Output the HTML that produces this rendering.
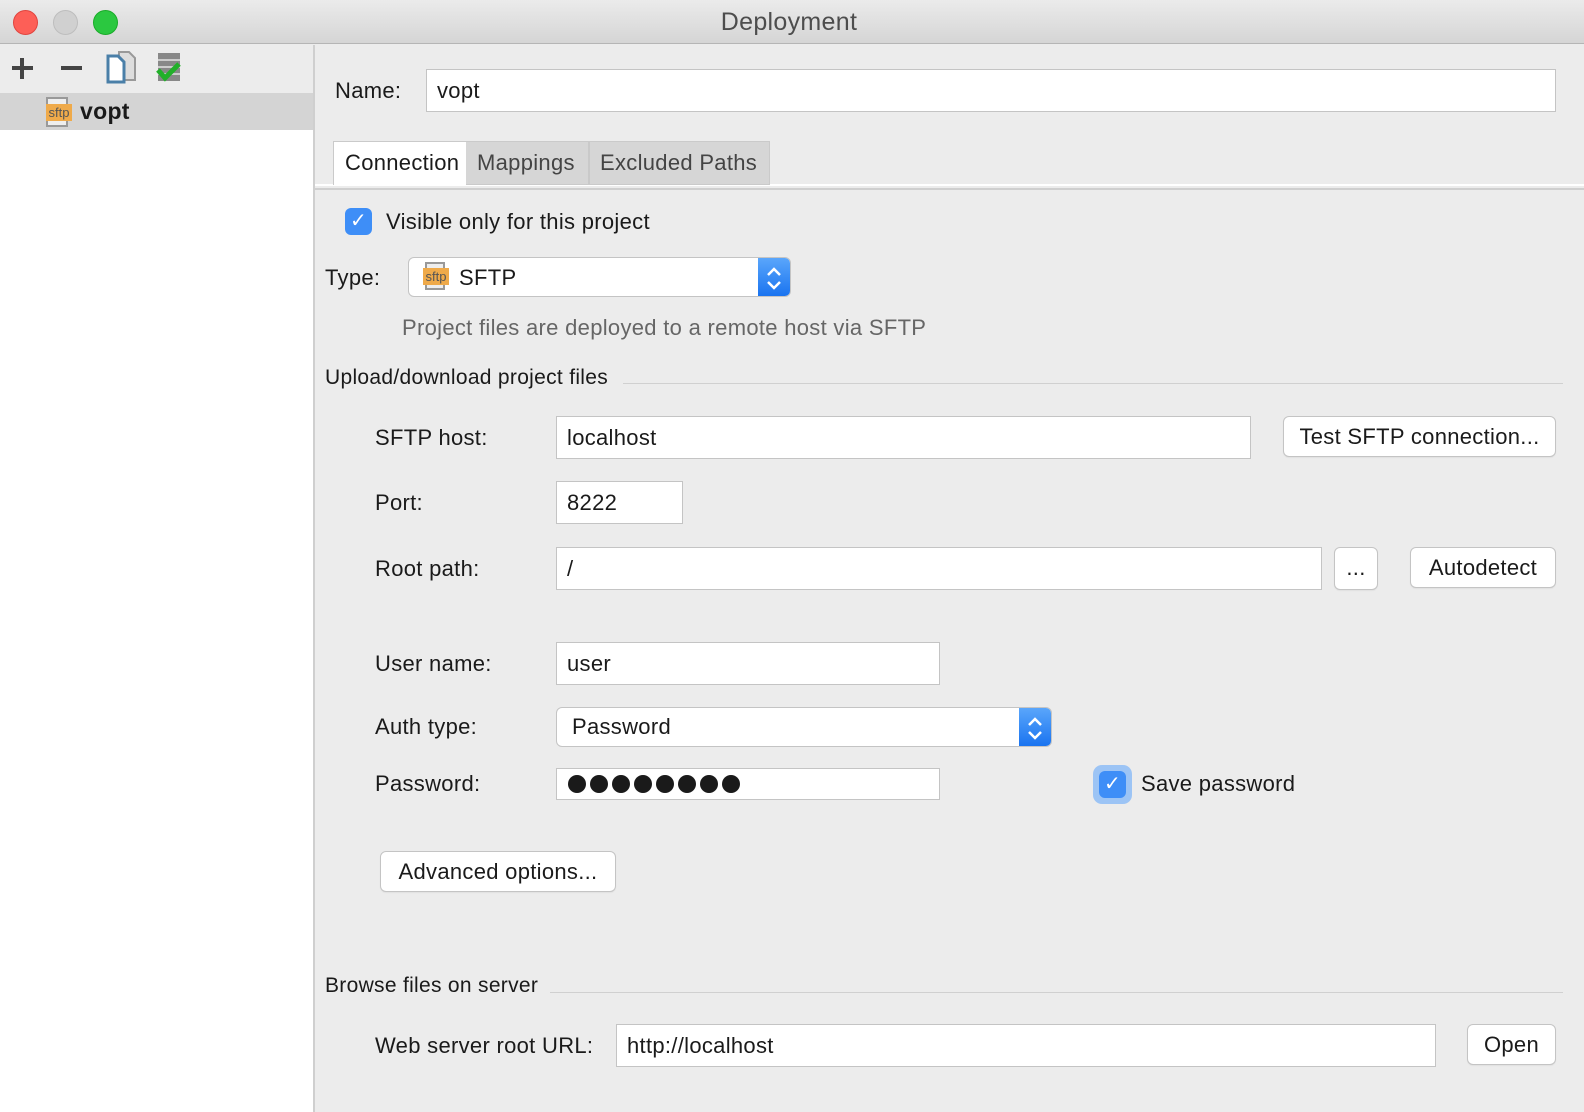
<!DOCTYPE html>
<html><head><meta charset="utf-8"><style>
*{box-sizing:border-box;margin:0;padding:0}
body{width:1584px;height:1112px;overflow:hidden;background:#ececec;font-family:"Liberation Sans",sans-serif;font-size:22px;letter-spacing:0.3px;color:#1a1a1a;position:relative}
.a{position:absolute;white-space:nowrap}
.tb{left:0;top:0;width:1584px;height:44px;background:linear-gradient(#ebebeb,#d5d5d5);border-bottom:1px solid #b5b5b5}
.dot{top:10px;width:25px;height:25px;border-radius:50%}
.inp{background:#fff;border:1px solid #c4c4c4;height:43px;padding:0 10px;line-height:41px}
.btn{background:#fff;border:1px solid #c4c4c4;border-radius:6px;height:41px;line-height:39px;text-align:center;box-shadow:0 1px 1px rgba(0,0,0,.05)}
.lbl{line-height:24px}
.cb{width:27px;height:27px;border-radius:6px;background:#3e8ef7;color:#fff;text-align:center;font-size:20px;line-height:27px}
.sel{background:#fff;border:1px solid #c4c4c4;border-radius:6px;overflow:hidden}
.arr{position:absolute;right:0;top:0;bottom:0;width:32px;background:linear-gradient(#5aa6fb,#1a74f0)}
.hr{height:1px;background:#d0d0d0}
</style></head><body>
<div class="a tb"></div>
<div class="a dot" style="left:13px;background:#fd5f57;border:1px solid #e0443e"></div>
<div class="a dot" style="left:53px;background:#d0d0d0;border:1px solid #bdbdbd"></div>
<div class="a dot" style="left:93px;background:#2bc840;border:1px solid #1aab29"></div>
<div class="a" style="left:0;width:1578px;top:8px;text-align:center;font-size:25px;color:#4d4d4d">Deployment</div>

<div class="a" style="left:0;top:45px;width:313px;height:1067px;background:#fff"></div>
<div class="a" style="left:0;top:45px;width:313px;height:48px;background:#ececec"></div>
<div class="a" style="left:313px;top:45px;width:2px;height:1067px;background:#cfcfcf"></div>
<div class="a" style="left:0;top:93px;width:313px;height:37px;background:#d4d4d4"></div>
<div class="a" style="left:12px;top:66px;width:21px;height:4px;background:#444"></div>
<div class="a" style="left:20px;top:58px;width:4px;height:21px;background:#444"></div>
<div class="a" style="left:61px;top:66px;width:21px;height:4px;background:#444"></div>
<svg class="a" style="left:105px;top:50px" width="32" height="34"><path d="M14 2h10l6 6v22H14z" fill="#ddd" stroke="#999" stroke-width="2"/><path d="M3 6h10l6 6v20H3z" fill="#fff" stroke="#4a7fa8" stroke-width="3"/></svg>
<svg class="a" style="left:155px;top:52px" width="28" height="32"><rect x="3" y="1" width="22" height="28" fill="#888"/><path d="M3 8h22M3 15h22M3 22h22" stroke="#ccc" stroke-width="2"/><path d="M3 18l7 8 14-14" stroke="#22b02a" stroke-width="5" fill="none"/></svg>
<div class="a" style="left:46px;top:97px;width:22px;height:30px;border:2px solid #999;background:#eee"></div>
<div class="a" style="left:46px;top:104px;width:26px;height:17px;background:#efaa4a;font-size:13px;color:#555;line-height:17px;text-align:center;letter-spacing:0">sftp</div>
<div class="a" style="left:80px;top:98px;font-weight:bold;font-size:23px">vopt</div>

<div class="a lbl" style="left:335px;top:79px">Name:</div>
<div class="a inp" style="left:426px;top:69px;width:1130px">vopt</div>

<div class="a" style="left:315px;top:184px;width:1269px;height:2px;background:#fff"></div>
<div class="a" style="left:315px;top:188px;width:1269px;height:2px;background:#cfcfcf"></div>
<div class="a" style="left:333px;top:141px;width:437px;height:44px;background:#d6d6d6;border:1px solid #cacaca"></div>
<div class="a" style="left:334px;top:142px;width:132px;height:44px;background:#fff"></div>
<div class="a" style="left:588px;top:142px;width:2px;height:42px;background:#c9c9c9"></div>
<div class="a lbl" style="left:345px;top:151px">Connection</div>
<div class="a lbl" style="left:477px;top:151px;color:#444">Mappings</div>
<div class="a lbl" style="left:600px;top:151px;color:#444">Excluded Paths</div>

<div class="a cb" style="left:345px;top:208px">✓</div>
<div class="a lbl" style="left:386px;top:210px">Visible only for this project</div>

<div class="a lbl" style="left:325px;top:266px">Type:</div>
<div class="a sel" style="left:408px;top:257px;width:383px;height:40px"><div class="arr"><svg width="32" height="40"><path d="M10 17l6-6 6 6M10 24l6 6 6-6" stroke="#fff" stroke-width="2.5" fill="none"/></svg></div></div>
<div class="a" style="left:425px;top:262px;width:20px;height:28px;border:2px solid #999;background:#eee"></div>
<div class="a" style="left:423px;top:268px;width:26px;height:17px;background:#efaa4a;font-size:13px;color:#555;line-height:17px;text-align:center;letter-spacing:0">sftp</div>
<div class="a lbl" style="left:459px;top:266px">SFTP</div>
<div class="a lbl" style="left:402px;top:316px;color:#666">Project files are deployed to a remote host via SFTP</div>

<div class="a lbl" style="left:325px;top:366px;font-size:21px">Upload/download project files</div>
<div class="a hr" style="left:623px;top:383px;width:940px"></div>

<div class="a lbl" style="left:375px;top:426px">SFTP host:</div>
<div class="a inp" style="left:556px;top:416px;width:695px">localhost</div>
<div class="a btn" style="left:1283px;top:416px;width:273px">Test SFTP connection...</div>

<div class="a lbl" style="left:375px;top:491px">Port:</div>
<div class="a inp" style="left:556px;top:481px;width:127px">8222</div>

<div class="a lbl" style="left:375px;top:557px">Root path:</div>
<div class="a inp" style="left:556px;top:547px;width:766px">/</div>
<div class="a btn" style="left:1334px;top:547px;width:44px;height:43px">...</div>
<div class="a btn" style="left:1410px;top:547px;width:146px">Autodetect</div>

<div class="a lbl" style="left:375px;top:652px">User name:</div>
<div class="a inp" style="left:556px;top:642px;width:384px">user</div>

<div class="a lbl" style="left:375px;top:715px">Auth type:</div>
<div class="a sel" style="left:556px;top:707px;width:496px;height:40px;padding-left:15px;line-height:38px">Password<div class="arr"><svg width="32" height="40"><path d="M10 17l6-6 6 6M10 24l6 6 6-6" stroke="#fff" stroke-width="2.5" fill="none"/></svg></div></div>

<div class="a lbl" style="left:375px;top:772px">Password:</div>
<div class="a inp" style="left:556px;top:768px;width:384px;height:32px;padding:0"><svg width="384" height="30"><g fill="#1a1a1a"><circle cx="20" cy="15" r="9"/><circle cx="42" cy="15" r="9"/><circle cx="64" cy="15" r="9"/><circle cx="86" cy="15" r="9"/><circle cx="108" cy="15" r="9"/><circle cx="130" cy="15" r="9"/><circle cx="152" cy="15" r="9"/><circle cx="174" cy="15" r="9"/></g></svg></div>
<div class="a" style="left:1093px;top:765px;width:39px;height:39px;border-radius:9px;background:#9cc4f5"></div>
<div class="a cb" style="left:1099px;top:771px">✓</div>
<div class="a lbl" style="left:1141px;top:772px">Save password</div>

<div class="a btn" style="left:380px;top:851px;width:236px">Advanced options...</div>

<div class="a lbl" style="left:325px;top:974px;font-size:21px">Browse files on server</div>
<div class="a hr" style="left:550px;top:992px;width:1013px"></div>

<div class="a lbl" style="left:375px;top:1034px">Web server root URL:</div>
<div class="a inp" style="left:616px;top:1024px;width:820px">http://localhost</div>
<div class="a btn" style="left:1467px;top:1024px;width:89px">Open</div>
</body></html>
